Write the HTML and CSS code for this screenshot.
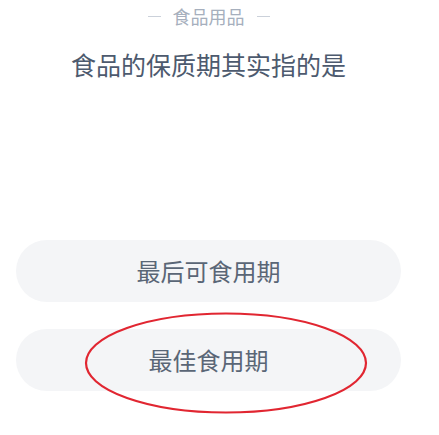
FILE: index.html
```html
<!DOCTYPE html>
<html lang="zh-CN">
<head>
  <meta charset="UTF-8">
  <meta name="viewport" content="width=device-width, initial-scale=1.0">
  <title>食品用品</title>
  <link rel="stylesheet" href="styles.css">
</head>
<body>
  <div class="page">
    <div class="category"><span class="dash"></span>食品用品<span class="dash"></span></div>
    <div class="question">食品的保质期其实指的是</div>

    <div class="options">
      <div class="option">最后可食用期</div>
      <div class="option">最佳食用期</div>
    </div>

    <!-- hand-drawn answer mark -->
    <svg class="mark" width="290" height="106" viewBox="0 0 290 106">
      <ellipse cx="145" cy="53" rx="140" ry="49.5" fill="none" stroke="#e12631" stroke-width="2.2"/>
    </svg>
  </div>
</body>
</html>
```

FILE: styles.css
```css
html, body {
  height: 100%;
}

body {
  margin: 0;
  padding: 0;
  background: #fff;
  font-family: "Noto Sans CJK SC", "Noto Sans", sans-serif;
}

.page {
  position: relative;
  width: 417px;
  min-height: 435px;
  padding: 0 16px;
  box-sizing: border-box;
}

.category {
  display: flex;
  justify-content: center;
  align-items: center;
  gap: 12px;
  height: 32px;
  font-size: 18px;
  color: #a6afbd;
}

.dash {
  display: inline-block;
  width: 13px;
  height: 1px;
  background: #cbd1da;
}

.question {
  margin-top: 14px;
  line-height: 36px;
  text-align: center;
  font-size: 25px;
  color: #4d5a6e;
}

.options {
  margin-top: 158px;
  display: flex;
  flex-direction: column;
  gap: 27px;
}

.option {
  height: 62px;
  line-height: 62px;
  border-radius: 31px;
  background: #f4f5f7;
  text-align: center;
  font-size: 24px;
  color: #5a6676;
}

.mark {
  position: absolute;
  left: 81px;
  top: 310px;
}
```
